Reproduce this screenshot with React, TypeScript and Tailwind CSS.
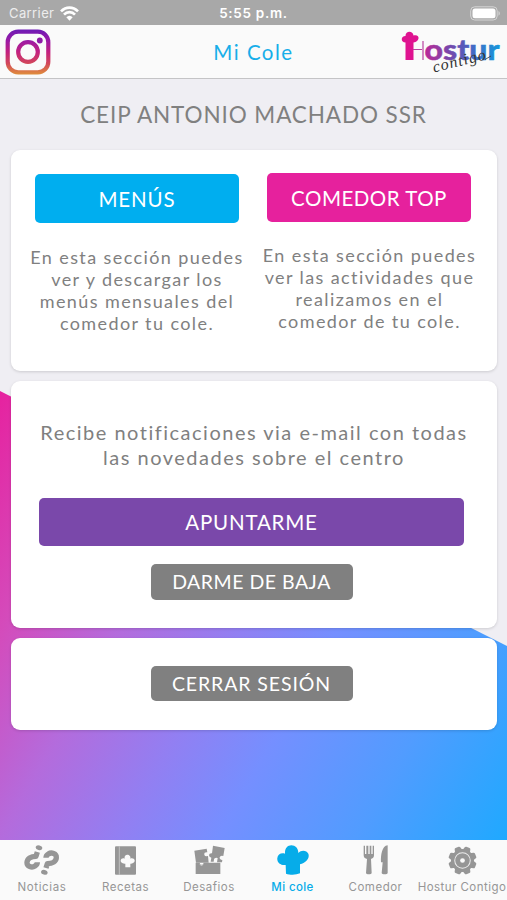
import React from 'react';

interface CardProps {
  className: string;
  children: React.ReactNode;
}

interface TabItem {
  label: string;
  icon: React.ReactNode;
  className: string;
  active?: boolean;
}

const HAT_PATH =
  'M96 130 L95 104 C80 106 68 96 70 83 C71 72 82 66 93 70 C92 54 101 45 112 45 C124 45 133 54 133 68 C142 58 158 60 163 70 C168 84 156 98 138 102 L138 129 C126 134 108 134 96 130 Z';

const WifiIcon = () => (
  <svg width="19" height="15" viewBox="185 16 57 45" fill="none" stroke="#fff" strokeWidth="8">
    <path d="M188 32 C203 17 224 17 239 32" />
    <path d="M197 42 C206 32 221 32 230 42" />
    <path d="M204 50 C210 44 217 44 223 50 L213.500 60 Z" fill="#fff" stroke="none" />
  </svg>
);

const BatteryIcon = () => (
  <svg width="31" height="15" viewBox="0 0 31 15">
    <rect x="0.700" y="0.800" width="26.500" height="13.200" rx="4" fill="none" stroke="#d4d4d4" strokeWidth="1" />
    <rect x="2.500" y="2.600" width="23" height="9.600" rx="2.500" fill="#fff" />
    <path d="M28.500 5 C30.300 5.800 30.300 9 28.500 9.800 Z" fill="#d4d4d4" />
  </svg>
);

const InstagramIcon = () => (
  <svg width="46" height="46" viewBox="0 0 46 46" fill="none">
    <defs>
      <linearGradient id="insta" x1="0" y1="0" x2="0" y2="46" gradientUnits="userSpaceOnUse">
        <stop offset="0" stopColor="#6a1bb5" />
        <stop offset="0.250" stopColor="#9a1aa6" />
        <stop offset="0.500" stopColor="#c3207f" />
        <stop offset="0.750" stopColor="#d2485a" />
        <stop offset="1" stopColor="#e0913a" />
      </linearGradient>
    </defs>
    <rect x="2.700" y="2.700" width="40.600" height="40.600" rx="10.500" stroke="url(#insta)" strokeWidth="4.200" />
    <circle cx="23" cy="23" r="9.800" stroke="url(#insta)" strokeWidth="4.200" />
    <circle cx="34.800" cy="11.500" r="2.900" fill="#8e1ba8" />
  </svg>
);

const HosturLogo = () => (
  <svg width="104" height="48" viewBox="398 29 104 48">
    <defs>
      <linearGradient id="hostur" x1="402" y1="0" x2="500" y2="0" gradientUnits="userSpaceOnUse">
        <stop offset="0.120" stopColor="#df1390" />
        <stop offset="0.300" stopColor="#a8329c" />
        <stop offset="0.480" stopColor="#7747ac" />
        <stop offset="0.700" stopColor="#4765c2" />
        <stop offset="1" stopColor="#1598dc" />
      </linearGradient>
    </defs>
    <path
      d="M405.500 61 V43.500 C400.500 43.500 400.500 37 405.500 37 C405.500 31.500 413 31.500 413.500 36.500 C420 34.500 420.500 42.500 413.500 43.500 V61 Z"
      fill="#df1390"
    />
    <path d="M413 50.500 H422 M423 42 V61" stroke="#b9439f" strokeWidth="1.200" fill="none" />
    <text
      x="424.500"
      y="60.800"
      fill="url(#hostur)"
      stroke="url(#hostur)"
      strokeWidth="0.400"
      textLength="75"
      lengthAdjust="spacingAndGlyphs"
      className="font-['Lato',sans-serif] text-[28px] font-black"
    >
      ostur
    </text>
    <text
      x="434"
      y="73.500"
      transform="rotate(-14 434 73.500)"
      fill="#333"
      textLength="54"
      className="font-['Liberation_Serif',serif] text-[16px] italic"
    >
      contigo
    </text>
    <path d="M485 60.500 L491 57" stroke="#333" strokeWidth="0.800" fill="none" />
  </svg>
);

const NewsIcon = () => (
  <svg width="36" height="30" viewBox="75 45 108 90" fill="none" stroke="currentColor" strokeWidth="16">
    <g id="mark">
      <path d="M115 66 L111 79 C95 79 85 86 84 97 C83 110 99 114 108 108 C113 105 115 102 115 97" strokeLinejoin="round" />
      <ellipse cx="120" cy="53" rx="10" ry="7" fill="currentColor" stroke="none" transform="rotate(14 120 53)" />
    </g>
    <use href="#mark" transform="rotate(180 128 90)" />
  </svg>
);

const RecipesIcon = () => (
  <svg width="21" height="29" viewBox="345 46 63 87" fill="currentColor">
    <rect x="345" y="47" width="63" height="85" rx="3" />
    <path d="M358 47 V132" stroke="#d5d5d5" strokeWidth="2" />
    <path
      d="M376 110 V99 C366 100 361 94 362 89 C363 83 370 81 374 84 C372 76 377 72 382 72 C388 72 393 77 391 84 C396 81 403 83 404 89 C405 95 399 100 391 99 V110 Z"
      fill="#fafafa"
    />
  </svg>
);

const ChallengesIcon = () => (
  <svg width="31" height="30" viewBox="581 45 93 90" fill="currentColor">
    <path d="M586 98 H598 Q599 104 604 104 Q609 104 610 98 H660 V132 H586 Z" />
    <path d="M582 62 L619 56 L621 67 Q611 66 612 74 Q613 80 623 78 L625 98 L587 98 Z" />
    <path d="M638 47 L673 54 L669 78 Q660 75 658 82 Q657 89 666 90 L665 97 H650 L652 84 Q642 82 641 88 L640 95 H631 L633 83 Q626 82 626 75 Q627 69 635 70 Z" />
    <path d="M598 103 Q604 110 609 103" fill="none" stroke="#e2e2e2" strokeWidth="2" />
  </svg>
);

const SchoolIcon = () => (
  <svg width="32" height="30" viewBox="69 44 96 90" fill="currentColor">
    <path d={HAT_PATH} />
  </svg>
);

const DiningIcon = () => (
  <svg width="26" height="30" viewBox="329 45 78 90" fill="currentColor">
    <path d="M331 47 H335 V72 H339 V47 H345 V72 H349 V47 H354 V72 H358 V47 H362 V76 C362 84 356 86 353 87 L355 129 C355 134 338 134 338 129 L341 87 C337 86 331 84 331 76 Z" />
    <path d="M403 46 V129 C403 134 385 134 385 129 L388 97 H383 C382 74 386 48 403 46 Z" />
  </svg>
);

const GearIcon = () => (
  <svg width="29" height="29" viewBox="-43 -43 86 86" fill="currentColor">
    {[0, 45, 90, 135, 180, 225, 270, 315].map((angle) => (
      <path key={angle} d="M-12 -28 L-9 -39 Q-8 -42 -5 -42 H5 Q8 -42 9 -39 L12 -28 Z" transform={`rotate(${angle + 22.5})`} />
    ))}
    <circle r="34" />
    <circle r="23" fill="none" stroke="#ededed" strokeWidth="3" />
    <circle r="7" fill="#fafafa" />
  </svg>
);

const TABS: TabItem[] = [
  { label: 'Noticias', icon: <NewsIcon />, className: 'w-[84px] tracking-[0.6px]' },
  { label: 'Recetas', icon: <RecipesIcon />, className: 'w-[83px] tracking-[0.5px]' },
  { label: 'Desafios', icon: <ChallengesIcon />, className: 'w-[84px] tracking-[0.5px]' },
  { label: 'Mi cole', icon: <SchoolIcon />, className: 'w-[83px] tracking-[0.4px]', active: true },
  { label: 'Comedor', icon: <DiningIcon />, className: 'w-[83px] tracking-[0.5px]' },
  { label: 'Hostur Contigo', icon: <GearIcon />, className: 'w-[90px] tracking-[0.45px]' }
];

const Card = ({ className, children }: CardProps) => (
  <section className={`ml-[11px] w-[486px] rounded-[9px] bg-white shadow-[0_1px_3px_0_rgba(0,0,0,0.15)] ${className}`}>
    {children}
  </section>
);

const StatusBar = () => (
  <div className="grid h-[25px] grid-cols-3 items-center bg-[#a8a8a8] pt-[2px] font-['Inter',sans-serif] text-[13px] text-white">
    <div className="flex items-center gap-[6px] pl-[9px]">
      <span className="tracking-[0.4px] text-[#ededed]">Carrier</span>
      <WifiIcon />
    </div>
    <span className="text-center text-[13.5px] font-semibold tracking-[0.7px]">5:55 p.m.</span>
    <div className="flex justify-end pr-[6px]">
      <BatteryIcon />
    </div>
  </div>
);

const Header = () => (
  <header className="flex h-[54px] items-center justify-between border-b border-[#c4c4c6] bg-[#fafafa] pr-[5px] pl-[5px]">
    <div className="flex w-[104px]">
      <InstagramIcon />
    </div>
    <h1 className="pt-px text-[20.5px] tracking-[1.5px] whitespace-nowrap text-[#17aee9]">Mi Cole</h1>
    <HosturLogo />
  </header>
);

const TabBar = () => (
  <nav className="flex h-[60px] bg-[#fafafa] font-['Inter',sans-serif] text-[11.5px]">
    {TABS.map(({ label, icon, className, active }) => (
      <button
        key={label}
        type="button"
        className={`flex shrink-0 flex-col items-center pt-[5px] ${active ? 'font-medium text-[#06ace9]' : 'text-[#969696]'} ${className}`}
      >
        <span className="flex h-[30px] items-center">{icon}</span>
        <span className="mt-[3px] leading-[18px] whitespace-nowrap">{label}</span>
      </button>
    ))}
  </nav>
);

const App = () => {
  return (
    <div className="flex h-[900px] w-[507px] flex-col overflow-hidden bg-[#efeef3] font-['Lato',sans-serif]">
      <StatusBar />
      <Header />
      <main className="relative isolate flex-1">
        <div className="absolute inset-x-0 top-[312px] bottom-0 -z-10 bg-[linear-gradient(120deg,#e6229f_0%,#d44bbb_18%,#b46bdc_33.5%,#927ff2_49%,#758fff_62%,#519cff_80%,#1fa9ff_100%)] [clip-path:polygon(0_0,100%_255px,100%_100%,0_100%)]" />
        <h2 className="pt-[20px] text-center text-[22.5px] leading-[31px] tracking-[0.9px] text-[#808080]">
          CEIP ANTONIO MACHADO SSR
        </h2>
        <Card className="mt-[20px] flex h-[221px] gap-[15px] pt-[23px] pl-[11px] text-[#808080]">
          <div className="flex w-[230px] flex-col items-center pt-[1px]">
            <button type="button" className="h-[49px] w-[204px] rounded-[5px] bg-[#00aeef] pt-px text-[20.5px] tracking-[0.9px] text-white">
              MENÚS
            </button>
            <p className="mt-[23px] text-center text-[18px] leading-[22px] tracking-[1.4px] whitespace-nowrap">
              En esta sección puedes
              <br />
              ver y descargar los
              <br />
              menús mensuales del
              <br />
              comedor tu cole.
            </p>
          </div>
          <div className="flex w-[204px] flex-col items-center">
            <button type="button" className="h-[49px] w-[204px] rounded-[5px] bg-[#e6219d] pt-px text-[20.5px] tracking-[0.5px] text-white">
              COMEDOR TOP
            </button>
            <p className="mt-[22px] ml-px text-center text-[18px] leading-[22px] tracking-[1.4px] whitespace-nowrap">
              En esta sección puedes
              <br />
              ver las actividades que
              <br />
              realizamos en el
              <br />
              comedor de tu cole.
            </p>
          </div>
        </Card>
        <Card className="mt-[10px] flex h-[247px] flex-col items-center pt-[39px] pr-[5px]">
          <p className="ml-[5px] text-center text-[20px] leading-[24.5px] tracking-[1.5px] whitespace-nowrap text-[#808080]">
            Recibe notificaciones via e-mail con todas
            <br />
            las novedades sobre el centro
          </p>
          <button type="button" className="mt-[29px] h-[48px] w-[425px] shrink-0 rounded-[5px] bg-[#7a48aa] text-[20.5px] tracking-[0.8px] text-white">
            APUNTARME
          </button>
          <button type="button" className="mt-[18px] h-[36px] w-[202px] shrink-0 rounded-[5px] bg-[#808080] text-[19.5px] tracking-[0.5px] text-white">
            DARME DE BAJA
          </button>
        </Card>
        <Card className="mt-[10px] flex h-[92px] justify-center pt-[28px] pr-[5px]">
          <button type="button" className="h-[35px] w-[202px] rounded-[5px] bg-[#808080] text-[19.5px] tracking-[0.9px] text-white">
            CERRAR SESIÓN
          </button>
        </Card>
      </main>
      <TabBar />
    </div>
  );
};

export default App;
